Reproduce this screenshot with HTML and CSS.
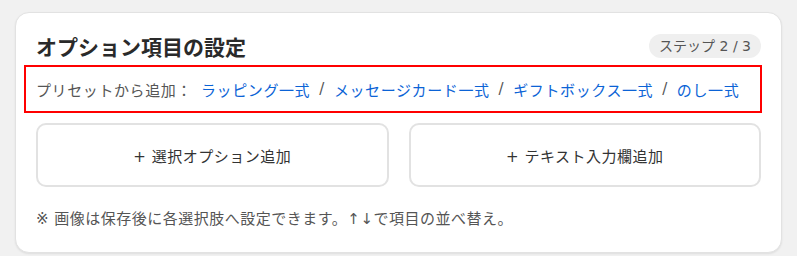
FILE: index.html
```html
<!DOCTYPE html>
<html lang="ja">
<head>
    <meta charset="UTF-8">
    <meta name="viewport" content="width=device-width, initial-scale=1.0">
    <title>オプション項目の設定</title>
    <link rel="stylesheet" href="styles.css">
</head>
<body>
    <div class="card">
        <div class="card-header">
            <h2 class="card-title">オプション項目の設定</h2>
            <span class="step-badge">ステップ 2 / 3</span>
        </div>

        <div class="preset-row">
            <span class="preset-label">プリセットから追加：</span>
            <a href="#" class="preset-link">ラッピング一式</a>
            <span class="sep">/</span>
            <a href="#" class="preset-link">メッセージカード一式</a>
            <span class="sep">/</span>
            <a href="#" class="preset-link">ギフトボックス一式</a>
            <span class="sep">/</span>
            <a href="#" class="preset-link">のし一式</a>
        </div>

        <div class="add-buttons">
            <button class="add-btn">+ 選択オプション追加</button>
            <button class="add-btn">+ テキスト入力欄追加</button>
        </div>

        <p class="note">※ 画像は保存後に各選択肢へ設定できます。↑↓で項目の並べ替え。</p>
    </div>
</body>
</html>
```

FILE: styles.css
```css
html, body {
    margin: 0;
    background: #f1f1f1;
    font-family: "DejaVu Sans", "Noto Sans CJK JP", sans-serif;
}
body {
    padding: 12px 15px;
}
.card {
    background: #fff;
    border: 1px solid #e2e2e2;
    border-radius: 14px;
    box-shadow: 0 1px 2px rgba(0, 0, 0, 0.08);
    padding: 18px 20px 24px 20px;
}
.card-header {
    display: flex;
    justify-content: space-between;
    align-items: center;
    height: 30px;
}
.card-title {
    margin: 0;
    font-size: 21px;
    font-weight: 700;
    color: #2a2a2a;
}
.step-badge {
    background: #efefef;
    color: #555;
    font-size: 14px;
    padding: 0 10px;
    height: 24px;
    line-height: 24px;
    border-radius: 12px;
}
.preset-row {
    display: flex;
    align-items: center;
    margin: 4px -1px 0 -12px;
    padding: 0 0 0 10px;
    height: 44px;
    border: 2px solid #f00;
    font-size: 15px;
    letter-spacing: 0.6px;
}
.preset-label {
    color: #555;
    margin-right: 9px;
}
.preset-link {
    color: #0b63d6;
    text-decoration: none;
}
.sep {
    color: #555;
    margin: 0 9px;
}
.add-buttons {
    display: grid;
    grid-template-columns: 1fr 1fr;
    gap: 20px;
    margin-top: 10px;
}
.add-btn {
    height: 64px;
    background: #fff;
    border: 2px solid #e2e2e2;
    border-radius: 10px;
    font-family: inherit;
    font-size: 15px;
    color: #333;
    letter-spacing: 0.5px;
    cursor: pointer;
}
.note {
    margin: 20px 0 0;
    font-size: 15px;
    color: #555;
    letter-spacing: 0.5px;
}
```
